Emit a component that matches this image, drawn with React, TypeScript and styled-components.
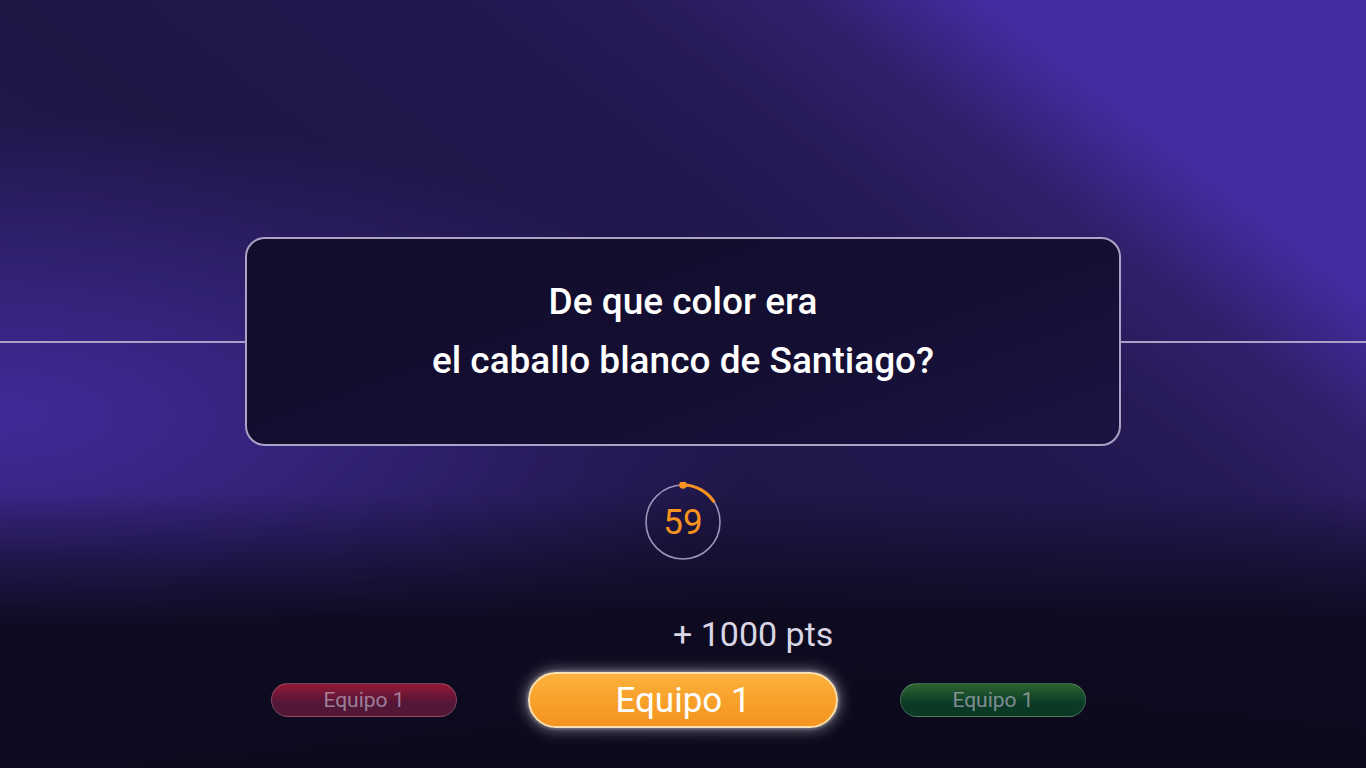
import React from "react";
import styled, { createGlobalStyle } from "styled-components";

const GlobalStyle = createGlobalStyle`
  html, body { margin: 0; padding: 0; }
  body { font-family: Roboto, "Noto Sans", "Liberation Sans", sans-serif; background: #0c0a1c; }
  * { box-sizing: border-box; }
`;

const Page = styled.div`
  width: 1366px;
  height: 768px;
  overflow: hidden;
  display: flex;
  flex-direction: column;
  align-items: stretch;
  padding-top: 237px;
  background:
    linear-gradient(180deg, rgba(11, 8, 25, 0) 64%, rgba(11, 8, 25, 0.87) 81%, rgba(11, 8, 25, 0.92) 100%),
    radial-gradient(ellipse 760px 300px at 0% 54%, rgba(64, 42, 152, 1) 0%, rgba(64, 42, 152, 0.55) 45%, rgba(64, 42, 152, 0) 100%),
    linear-gradient(38deg, #281c5b 0%, #1f1646 42%, #221850 62%, #261a56 68%, #30206c 76%, #452ca3 84%, #452ca3 100%);
`;

const Stage = styled.div`
  display: flex;
  align-items: center;
  height: 209px;
`;

const Rule = styled.div`
  flex: 1;
  height: 2px;
  background: #aaa0c8;
`;

const QuestionCard = styled.div`
  width: 876px;
  height: 209px;
  border: 2px solid #aca2c6;
  border-radius: 20px;
  background: linear-gradient(160deg, #110c2b 0%, #140e31 55%, #1b1343 100%);
  padding: 33px 40px 0;
  display: flex;
  flex-direction: column;
  align-items: center;
`;

const QuestionLine = styled.div`
  font-size: 37px;
  font-weight: 500;
  line-height: 59px;
  color: #ffffff;
  text-align: center;
  white-space: nowrap;
`;

const TimerWrap = styled.div`
  align-self: center;
  margin-top: 36px;
  width: 80px;
  height: 80px;
  position: relative;
  display: flex;
  align-items: center;
  justify-content: center;
`;

const TimerSvg = styled.svg`
  position: absolute;
  inset: 0;
`;

const TimerValue = styled.span`
  position: relative;
  font-size: 35px;
  font-weight: 400;
  color: #f7931e;
  line-height: 1;
  padding-top: 1px;
`;

const Points = styled.div`
  margin-top: 52px;
  padding-left: 673px;
  font-size: 34px;
  font-weight: 400;
  line-height: 40px;
  color: #d9d5e4;
  white-space: nowrap;
`;

const TeamRow = styled.div`
  margin-top: 18px;
  display: flex;
  align-items: center;
  justify-content: center;
  gap: 62px;
  padding-right: 9px;
`;

const teamColors: Record<string, [string, string]> = {
  red: ["#9d1a38", "#58183a"],
  green: ["#2f6b33", "#0a3f27"],
};

const TeamPill = styled.div<{ $tone: "red" | "green"; $extra?: number }>`
  width: 186px;
  height: 34px;
  border-radius: 17px;
  border: 1px solid rgba(255, 255, 255, 0.22);
  background: linear-gradient(
    180deg,
    ${(p) => teamColors[p.$tone][0]} 0%,
    ${(p) => teamColors[p.$tone][1]} 62%,
    ${(p) => teamColors[p.$tone][1]} 100%
  );
  margin-right: ${(p) => p.$extra ?? 0}px;
  display: flex;
  align-items: center;
  justify-content: center;
  font-size: 21px;
  color: rgba(220, 210, 230, 0.62);
  opacity: 0.92;
`;

const ActivePill = styled.div`
  width: 310px;
  height: 56px;
  border-radius: 28px;
  border: 2px solid #fbe0b4;
  background: linear-gradient(180deg, #fcb23e 0%, #f8a22c 45%, #f49520 100%);
  box-shadow: 0 0 14px 3px rgba(255, 255, 255, 0.35), 0 0 4px rgba(255, 255, 255, 0.5);
  display: flex;
  align-items: center;
  justify-content: center;
  font-size: 35px;
  color: #ffffff;
  padding-top: 1px;
`;

function Timer({ value, fraction }: { value: number; fraction: number }) {
  const r = 37;
  const cx = 40;
  const cy = 40;
  const angle = fraction * 2 * Math.PI;
  const ex = cx + r * Math.sin(angle);
  const ey = cy - r * Math.cos(angle);
  const large = fraction > 0.5 ? 1 : 0;
  return (
    <TimerWrap>
      <TimerSvg width="80" height="80" viewBox="0 0 80 80">
        <circle cx={cx} cy={cy} r={r} fill="none" stroke="#9c93b8" strokeWidth="1.6" />
        <path
          d={`M ${cx} ${cy - r} A ${r} ${r} 0 ${large} 1 ${ex.toFixed(2)} ${ey.toFixed(2)}`}
          fill="none"
          stroke="#f7931e"
          strokeWidth="3.2"
        />
        <circle cx={cx} cy={cy - r} r="3.8" fill="#f7931e" />
      </TimerSvg>
      <TimerValue>{value}</TimerValue>
    </TimerWrap>
  );
}

export default function App() {
  return (
    <>
      <GlobalStyle />
      <Page>
        <Stage>
          <Rule />
          <QuestionCard>
            <QuestionLine>De que color era</QuestionLine>
            <QuestionLine>el caballo blanco de Santiago?</QuestionLine>
          </QuestionCard>
          <Rule />
        </Stage>
        <Timer value={59} fraction={0.16} />
        <Points>+ 1000 pts</Points>
        <TeamRow>
          <TeamPill $tone="red" $extra={9}>Equipo 1</TeamPill>
          <ActivePill>Equipo 1</ActivePill>
          <TeamPill $tone="green">Equipo 1</TeamPill>
        </TeamRow>
      </Page>
    </>
  );
}
